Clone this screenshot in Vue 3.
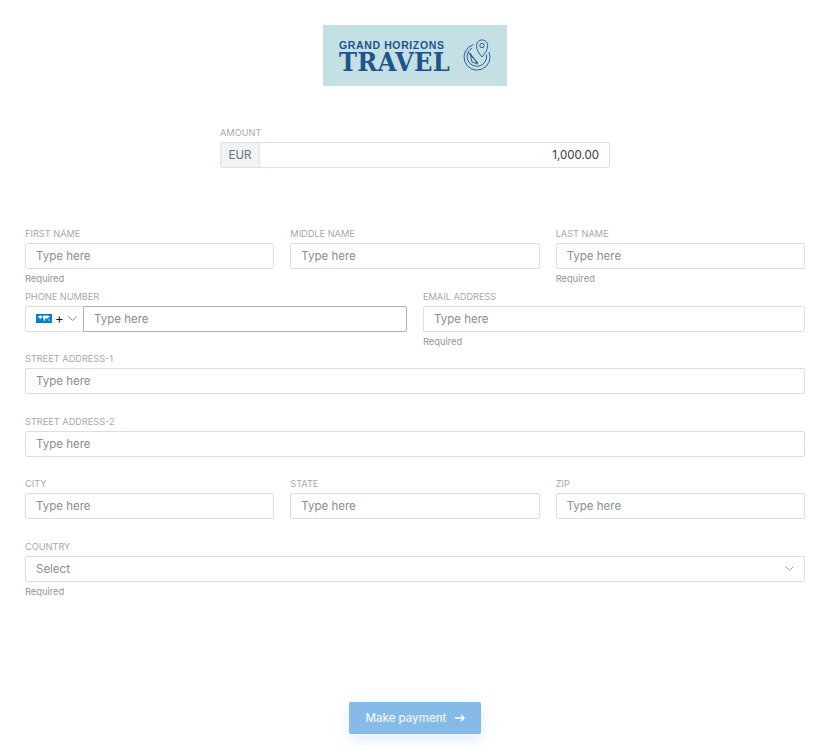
<script setup>
const rows = [
  { cls: 'three', fields: [
    { label: 'FIRST NAME', req: true },
    { label: 'MIDDLE NAME' },
    { label: 'LAST NAME', req: true },
  ] },
  { cls: 'two', fields: [
    { label: 'PHONE NUMBER', phone: true },
    { label: 'EMAIL ADDRESS', req: true },
  ] },
  { cls: 'one', fields: [{ label: 'STREET ADDRESS-1' }] },
  { cls: 'one', fields: [{ label: 'STREET ADDRESS-2' }] },
  { cls: 'three', fields: [{ label: 'CITY' }, { label: 'STATE' }, { label: 'ZIP' }] },
  { cls: 'one', fields: [{ label: 'COUNTRY', select: true, req: true }] },
]
</script>

<template>
  <div class="page">
    <div class="logo">
      <div class="logo-text">
        <span class="logo-top">GRAND HORIZONS</span>
        <span class="logo-main">TRAVEL</span>
      </div>
      <svg class="compass" width="30" height="33" viewBox="0 0 30 33" fill="none" stroke="#2f6391" stroke-width="1">
        <path d="M11.5 6.6A13 13 0 1 0 27 14" />
        <path d="M10 10A9.8 9.8 0 1 0 24.5 16.5" />
        <path d="M20 19C16.5 14.5 14.5 12 14.5 7.5A5.6 5.6 0 0 1 25.7 7.5C25.7 12 23.5 14.5 20 19Z" fill="#c5e0e5" />
        <circle cx="20" cy="7.5" r="2.2" />
        <path d="M6.5 14.5L16 25L11 20Z" fill="#2f6391" />
        <path d="M8 15L15.5 26L10 24Z" />
      </svg>
    </div>

    <div class="amount">
      <label class="label">AMOUNT</label>
      <div class="amount-box">
        <span class="addon">EUR</span>
        <span class="amount-value">1,000.00</span>
      </div>
    </div>

    <form class="form" @submit.prevent>
      <div v-for="(row, i) in rows" :key="i" class="row" :class="row.cls">
        <div v-for="field in row.fields" :key="field.label" class="field">
          <label class="label">{{ field.label }}</label>
          <div v-if="field.phone" class="phone">
            <span class="dial">
              <svg class="flag" width="16" height="9" viewBox="0 0 16 9">
                <rect width="16" height="9" fill="#0a7ccf" />
                <path d="M2 2.2L5 1.6L6.4 2.6L5.2 4L4.6 5.6L3.8 4.2L2.6 3.4ZM6.8 1.8L10 1.4L13.8 2L13 3.6L11.6 3.8L11.2 5.4L10.2 4L9 4.4L9.2 6.6L8 7L7.4 4.6L6.6 3.4ZM12.4 5.6L13.8 5.4L14 6.6L12.8 6.8Z" fill="#fff" />
              </svg>
              <span class="plus">+</span>
              <svg class="chev" width="9" height="5" viewBox="0 0 9 5" fill="none" stroke="#7f93a8" stroke-width="1"><path d="M.5.5l4 4 4-4" /></svg>
            </span>
            <input class="phone-input" placeholder="Type here" />
          </div>
          <div v-else-if="field.select" class="input select">
            <span class="select-text">Select</span>
            <svg width="9" height="5" viewBox="0 0 9 5" fill="none" stroke="#9aa5ae" stroke-width="1"><path d="M.5.5l4 4 4-4" /></svg>
          </div>
          <input v-else class="input" placeholder="Type here" />
          <div v-if="field.req" class="help">Required</div>
        </div>
      </div>
    </form>

    <div class="actions">
      <button class="pay" type="button">
        <span>Make payment</span>
        <svg width="10" height="8" viewBox="0 0 10 8" fill="none" stroke="#fff" stroke-width="1.4"><path d="M0 4h9M5.8.8L9 4 5.8 7.2" /></svg>
      </button>
    </div>
  </div>
</template>

<style>
html, body { margin: 0; background: #fff; }
</style>

<style scoped>
.page {
  width: 780px;
  height: 750px;
  overflow: hidden;
  padding: 25px 28px 0 25px;
  font-family: Inter, "Noto Sans", sans-serif;
  box-sizing: content-box;
}
.logo {
  width: 184px;
  height: 61px;
  margin: 0 auto;
  background: #c5e0e5;
  display: flex;
  align-items: center;
  justify-content: center;
  gap: 4px;
  color: #1f5488;
  padding-left: 1px;
  box-sizing: border-box;
}
.logo-text { display: flex; flex-direction: column; align-items: flex-start; }
.logo-top {
  font: 700 10.5px/12px "Liberation Sans", sans-serif;
  letter-spacing: .62px;
}
.logo-main {
  font: 700 26px/22px "DejaVu Serif", serif;
  letter-spacing: .3px;
  transform: scaleX(.93);
  transform-origin: left center;
  width: 119px;
}
.compass { flex: none; margin-top: -3px; }
.amount {
  width: 390px;
  margin: 40px auto 0;
}
.label {
  display: block;
  height: 16px;
  font-size: 9.2px;
  line-height: 13px;
  color: #a3a9af;
  white-space: nowrap;
}
.amount-box {
  height: 26px;
  display: flex;
  align-items: stretch;
  border: 1px solid #dde1e5;
  border-radius: 2px;
  box-sizing: border-box;
}
.addon {
  width: 39px;
  background: #f0f3f5;
  border-right: 1px solid #dde1e5;
  display: flex;
  align-items: center;
  justify-content: center;
  font-size: 11.5px;
  color: #68757f;
  box-sizing: border-box;
}
.amount-value {
  flex: 1;
  display: flex;
  align-items: center;
  justify-content: flex-end;
  padding-right: 10px;
  font-size: 11.5px;
  color: #343a40;
}
.form { margin-top: 59px; }
.row {
  display: grid;
  column-gap: 16px;
  height: 62.5px;
}
.three { grid-template-columns: repeat(3, 1fr); }
.two { grid-template-columns: repeat(2, 1fr); }
.one { grid-template-columns: 1fr; }
.field { min-width: 0; }
.input {
  display: flex;
  align-items: center;
  justify-content: space-between;
  width: 100%;
  height: 26px;
  margin: 0;
  border: 1px solid #dbdfe3;
  border-radius: 2px;
  padding: 0 10px;
  box-sizing: border-box;
  background: #fff;
  font: 11.5px Inter, "Noto Sans", sans-serif;
  outline: none;
}
.input::placeholder, .phone-input::placeholder { color: #868e96; opacity: 1; }
.select-text { color: #868e96; }
.help {
  margin-top: 3px;
  font-size: 9.3px;
  line-height: 13px;
  color: #8f979d;
}
.phone { display: flex; height: 26px; }
.dial {
  width: 58px;
  display: flex;
  align-items: center;
  padding-left: 10px;
  gap: 3px;
  border: 1px solid #dbdfe3;
  border-right: 0;
  border-radius: 2px 0 0 2px;
  box-sizing: border-box;
  flex: none;
}
.plus { font-size: 13px; line-height: 13px; color: #111; }
.chev { margin-left: 1px; }
.phone-input {
  flex: 1;
  min-width: 0;
  margin: 0;
  border: 1px solid #adb0b3;
  border-radius: 0 2px 2px 0;
  padding: 0 10px;
  box-sizing: border-box;
  font: 11.5px Inter, "Noto Sans", sans-serif;
  outline: none;
}
.actions {
  display: flex;
  justify-content: center;
  margin-top: 100px;
}
.pay {
  width: 132px;
  height: 32px;
  border: 0;
  border-radius: 2px;
  background: #86bbe8;
  color: #eef6fd;
  font: 500 11.5px Inter, "Noto Sans", sans-serif;
  display: flex;
  align-items: center;
  justify-content: center;
  gap: 8px;
  box-shadow: 0 6px 14px rgba(134, 187, 232, .25);
}
</style>
